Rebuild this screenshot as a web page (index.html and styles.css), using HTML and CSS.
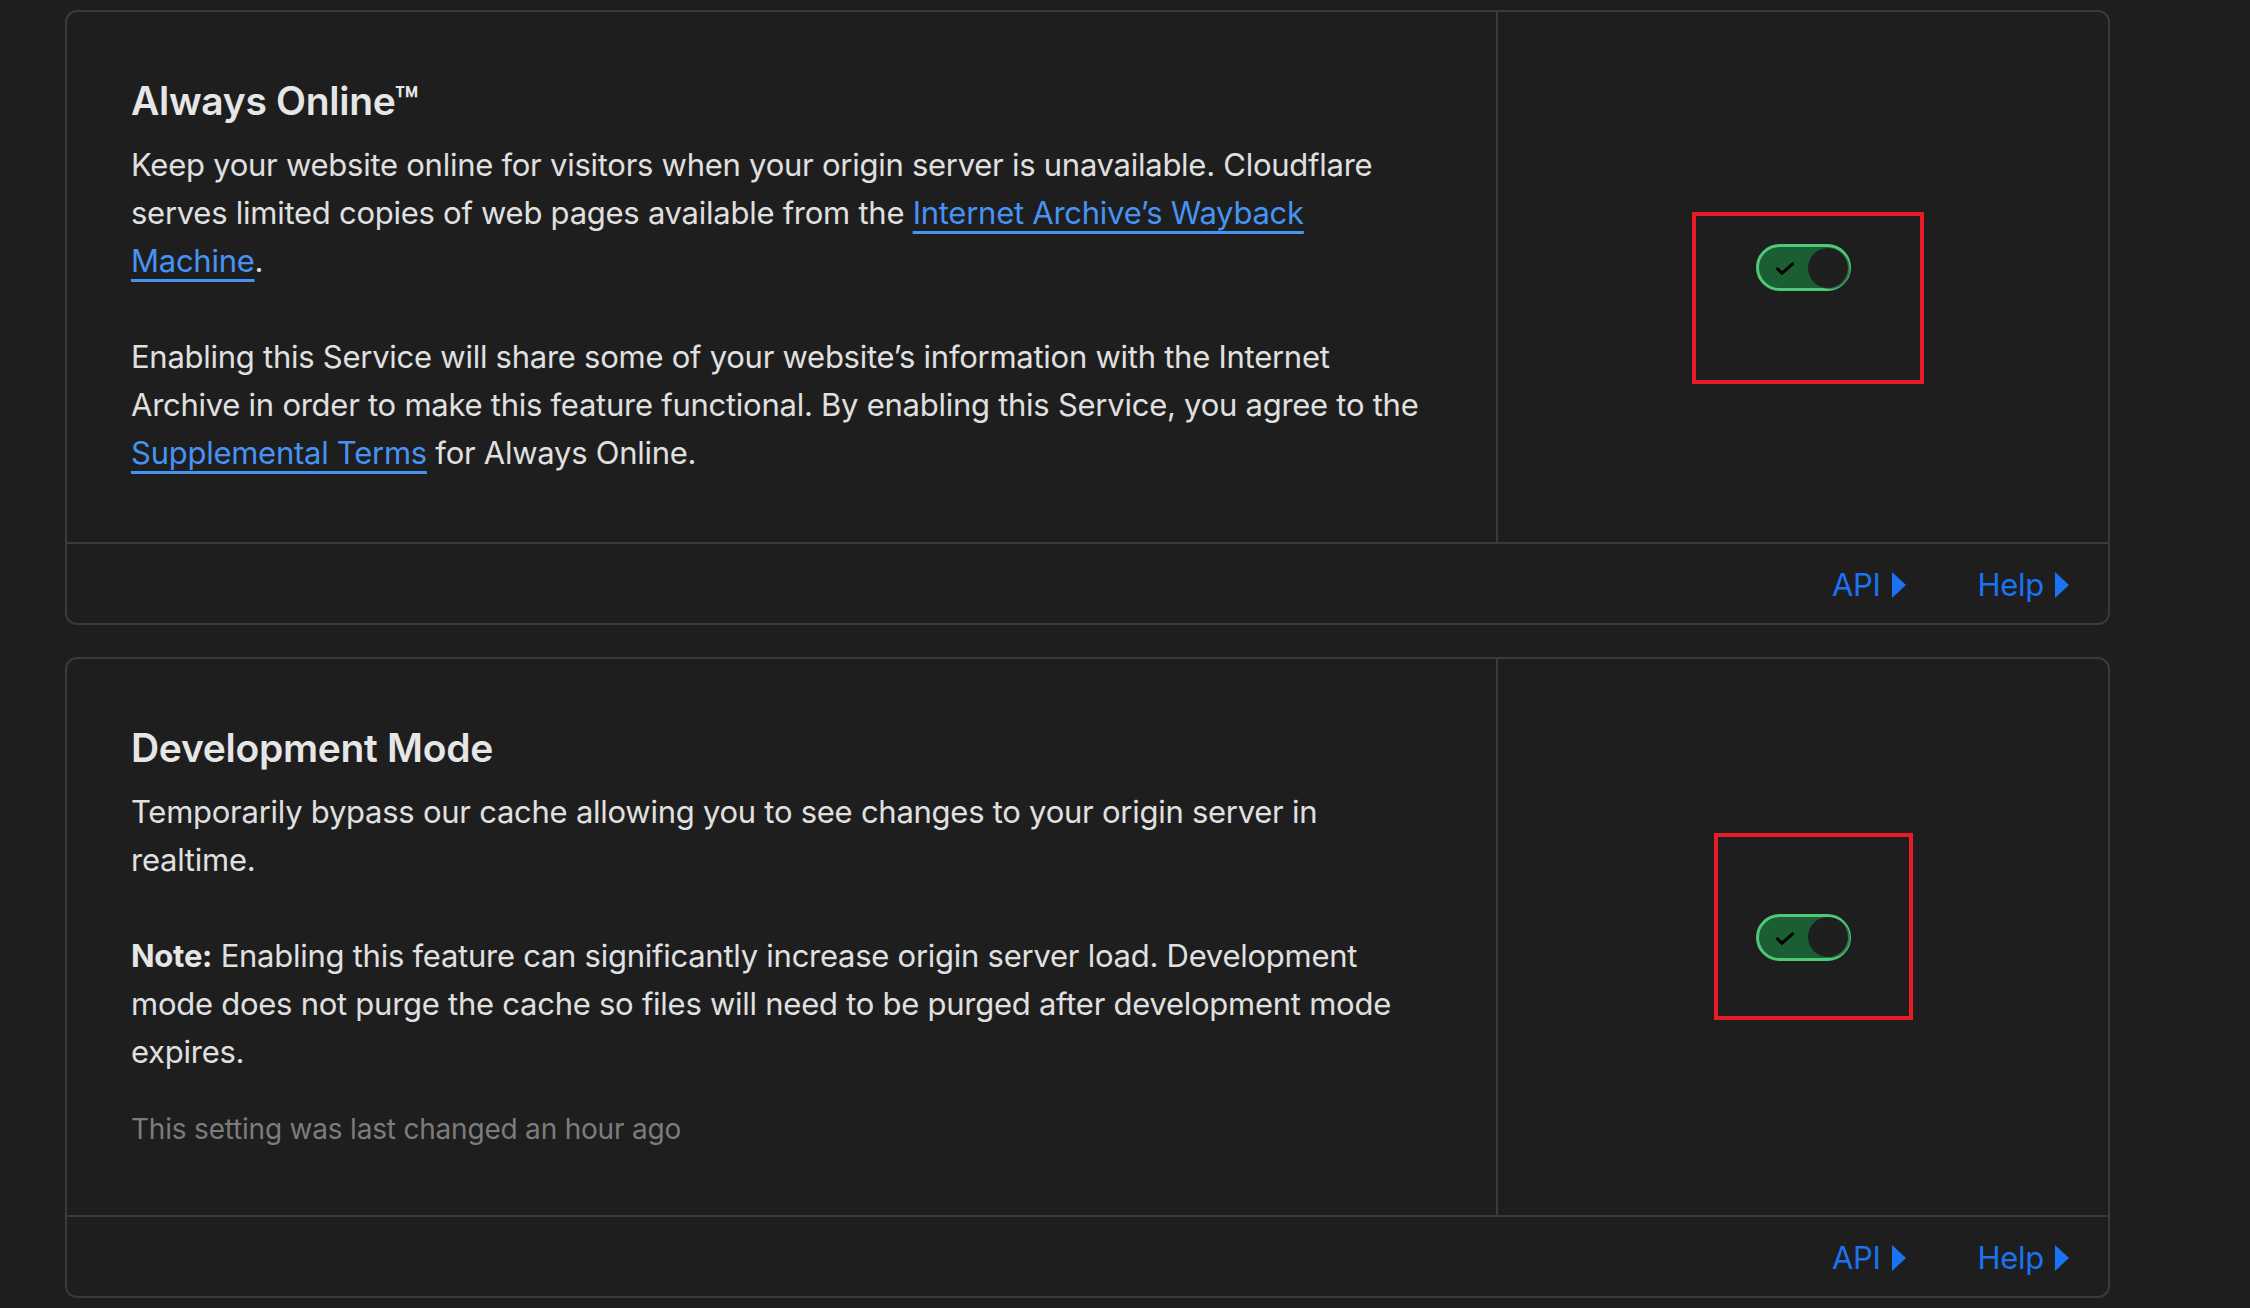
FILE: index.html
```html
<!DOCTYPE html>
<html lang="en">
<head>
<meta charset="utf-8">
<title>Settings</title>
<link rel="stylesheet" href="styles.css">
</head>
<body>
<main class="page">
  <section class="card">
    <div class="card-body">
      <div class="card-main">
        <h2 class="card-title">Always Online™</h2>
        <p class="card-text">Keep your website online for visitors when your origin server is unavailable. Cloudflare serves limited copies of web pages available from the <a class="text-link" href="#">Internet Archive’s Wayback Machine</a>.</p>
        <p class="card-text">Enabling this Service will share some of your website’s information with the Internet Archive in order to make this feature functional. By enabling this Service, you agree to the <a class="text-link" href="#">Supplemental Terms</a> for Always Online.</p>
      </div>
      <div class="card-side">
        <div class="toggle toggle-raised" role="switch" aria-checked="true">
          <svg class="toggle-check" viewBox="0 0 20 13" width="20" height="13"><path d="M1.5 6 L7 11.2 L18.5 1.2" fill="none" stroke="#000" stroke-width="3"/></svg>
          <span class="toggle-knob"></span>
        </div>
        <div class="highlight highlight-one"></div>
      </div>
    </div>
    <div class="card-footer">
      <a class="footer-link" href="#">API<span class="caret"></span></a>
      <a class="footer-link" href="#">Help<span class="caret"></span></a>
    </div>
  </section>

  <section class="card">
    <div class="card-body">
      <div class="card-main">
        <h2 class="card-title">Development Mode</h2>
        <p class="card-text">Temporarily bypass our cache allowing you to see changes to your origin server in realtime.</p>
        <p class="card-text"><strong>Note:</strong> Enabling this feature can significantly increase origin server load. Development mode does not purge the cache so files will need to be purged after development mode expires.</p>
        <p class="card-meta">This setting was last changed an hour ago</p>
      </div>
      <div class="card-side">
        <div class="toggle" role="switch" aria-checked="true">
          <svg class="toggle-check" viewBox="0 0 20 13" width="20" height="13"><path d="M1.5 6 L7 11.2 L18.5 1.2" fill="none" stroke="#000" stroke-width="3"/></svg>
          <span class="toggle-knob"></span>
        </div>
        <div class="highlight highlight-two"></div>
      </div>
    </div>
    <div class="card-footer">
      <a class="footer-link" href="#">API<span class="caret"></span></a>
      <a class="footer-link" href="#">Help<span class="caret"></span></a>
    </div>
  </section>
</main>
</body>
</html>
```

FILE: styles.css
```css
* { box-sizing: border-box; }

html, body {
  margin: 0;
  padding: 0;
  background: #1e1e1e;
}

body {
  font-family: Inter, "Liberation Sans", sans-serif;
  color: #e2e2e2;
  -webkit-font-smoothing: antialiased;
}

.page {
  padding: 10px 0 0 65px;
  display: flex;
  flex-direction: column;
  gap: 32px;
  width: 2110px;
}

.card {
  border: 2px solid #3a3a3a;
  border-radius: 12px;
  background: #1e1e1e;
}

.card-body {
  display: grid;
  grid-template-columns: 1431px 1fr;
}

.card-main {
  padding: 65px 64px 65px 64px;
  border-right: 2px solid #3a3a3a;
}

.card-title {
  margin: 0 0 16px;
  font-size: 39px;
  line-height: 48px;
  font-weight: 600;
  color: #e6e6e6;
  letter-spacing: -0.3px;
}

.card-text {
  margin: 0;
  font-size: 31px;
  line-height: 48px;
  font-weight: 400;
  letter-spacing: -0.26px;
  color: #e0e0e0;
}

.card-text + .card-text {
  margin-top: 48px;
}

.card-text strong {
  font-weight: 700;
  color: #e6e6e6;
}

.card-meta {
  margin: 32px 0 0;
  font-size: 28px;
  line-height: 42px;
  color: #7c7c7c;
  letter-spacing: -0.2px;
}

.text-link {
  color: #4693f3;
  text-decoration: underline;
  text-decoration-thickness: 3px;
  text-underline-offset: 7px;
}

.card-side {
  position: relative;
  display: flex;
  align-items: center;
  justify-content: center;
}

.toggle {
  position: relative;
  width: 95px;
  height: 47px;
  border: 3px solid #4fc878;
  border-radius: 24px;
  background: #1c5e34;
  display: flex;
  align-items: center;
  justify-content: space-between;
  padding: 0 0 0 16px;
}

.toggle-raised {
  margin-bottom: 19px;
}

.toggle-check {
  display: block;
  margin-top: 2px;
}

.toggle-knob {
  width: 40px;
  height: 40px;
  border-radius: 50%;
  background: #1f1f1f;
  box-shadow: 2px 1px 0 #2e7a47;
}

.highlight {
  position: absolute;
  border: 4px solid #e61c27;
  pointer-events: none;
}

.highlight-one {
  left: 194px;
  top: 200px;
  width: 232px;
  height: 172px;
}

.highlight-two {
  left: 216px;
  top: 174px;
  width: 199px;
  height: 187px;
}

.card-footer {
  border-top: 2px solid #3a3a3a;
  height: 81px;
  display: flex;
  align-items: center;
  justify-content: flex-end;
  gap: 72px;
  padding: 3px 39px 0 0;
}

.footer-link {
  display: flex;
  align-items: center;
  gap: 11px;
  color: #1a73f2;
  text-decoration: none;
  font-size: 31px;
  letter-spacing: -0.3px;
  line-height: 40px;
}

.caret {
  width: 0;
  height: 0;
  border-top: 13px solid transparent;
  border-bottom: 13px solid transparent;
  border-left: 14px solid #1a73f2;
}
```
